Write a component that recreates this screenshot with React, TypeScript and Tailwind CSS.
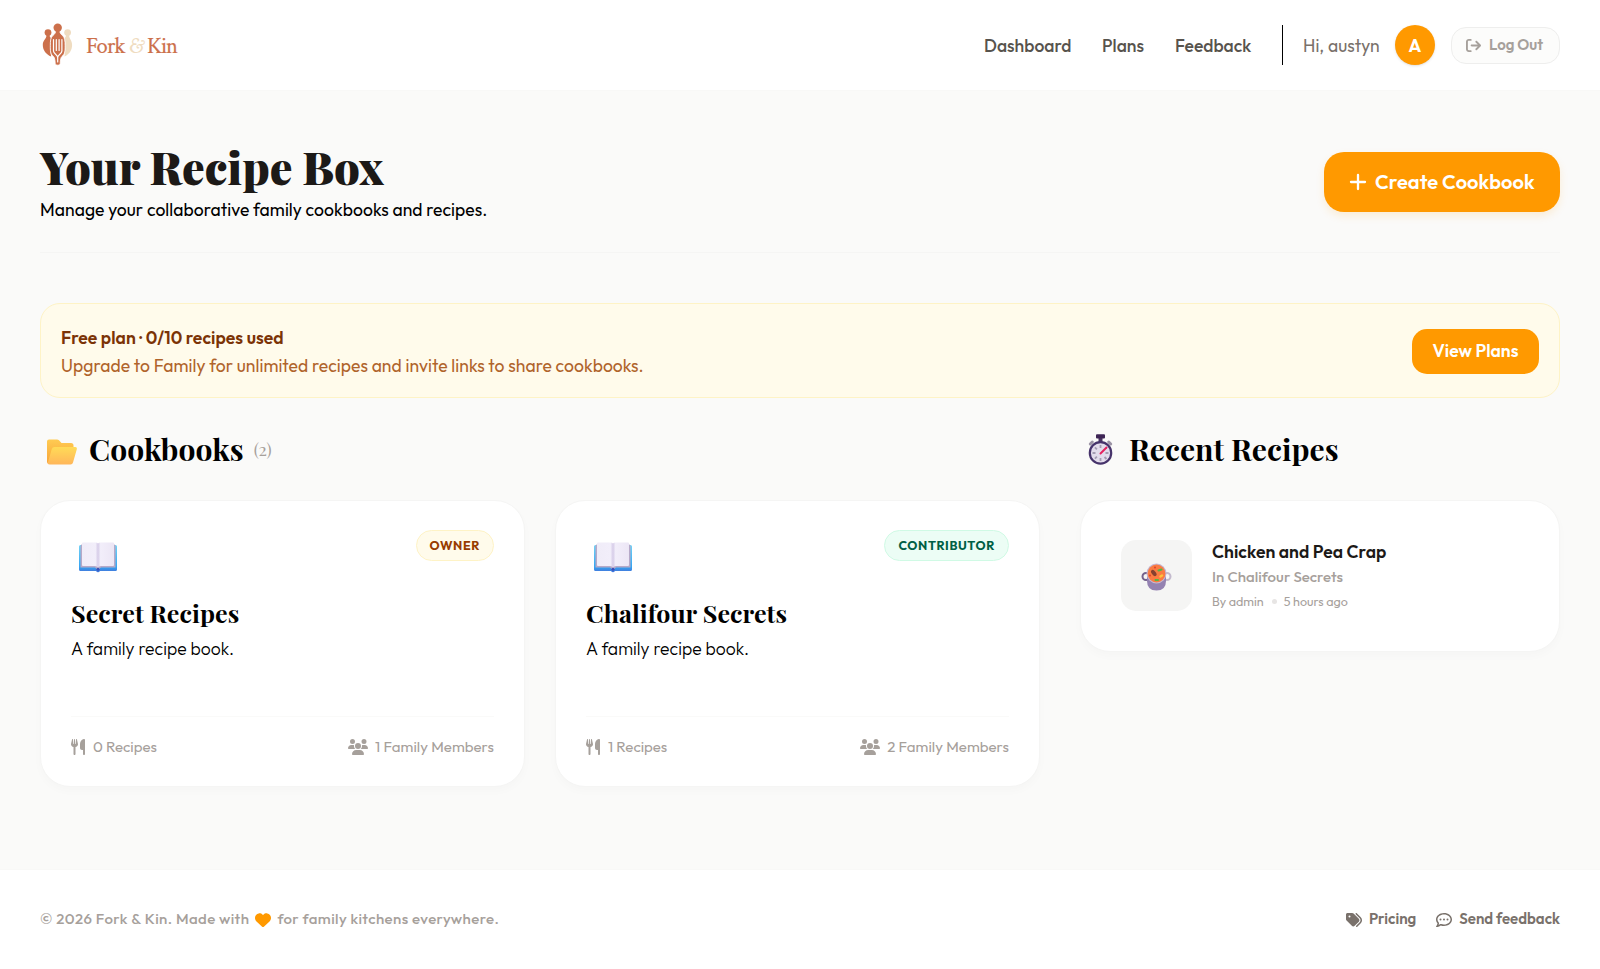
import type { ReactNode } from "react";
import { Plus } from "lucide-react";
import { FaArrowRightFromBracket, FaHeart, FaRegCommentDots, FaTags, FaUsers, FaUtensils } from "react-icons/fa6";

const serif = "font-['Playfair_Display','Liberation_Serif',serif]";

const cookbooks = [
  {
    title: "Secret Recipes",
    role: "OWNER",
    badge: "border-[#fef3c6] bg-[#fffbeb] text-[#973c00]",
    recipes: 0,
    members: 1,
  },
  {
    title: "Chalifour Secrets",
    role: "CONTRIBUTOR",
    badge: "border-[#d0fae5] bg-[#ecfdf5] text-[#006045]",
    recipes: 1,
    members: 2,
  },
];

function Logo() {
  return (
    <svg viewBox="40 20 140 50" className="h-[50px] w-[140px]" aria-label="Fork & Kin">
      <g fill="#cc704b">
        <circle cx="48" cy="32.6" r="3.4" />
        <path d="M46.5 35h3c.1 1.500.6 2.300 1.500 3-1 4-1.300 11 .2 18.500-5.200-2-8.400-6.500-8.400-11.500 0-5 3.600-5.500 3.700-10z" />
      </g>
      <g fill="#efdcc0">
        <circle cx="67.6" cy="32.6" r="3.4" />
        <path d="M66.1 35h3c.1 4.500 3 5 3 10 0 5-2.800 9.500-7.700 11.500 1.400-7.500 1.200-14.500.2-18.500.9-.7 1.400-1.500 1.500-3z" />
      </g>
      <path
        d="M55.800 30h3.800c.2 3 1 4 2.900 5.500 2.300 1.900 2.600 5.500 2.600 10 0 5 .1 8.500-3.200 11-1 .8-1.600 3.500-1.700 7 0 2.200-5 2.200-5 0-.1-3.500-.7-6.200-1.700-7-3.300-2.500-3.200-6-3.200-11 0-4.500.3-8.100 2.600-10 1.900-1.500 2.700-2.500 2.900-5.500z"
        fill="#cc704b"
        stroke="#fff"
        strokeWidth=".8"
      />
      <circle cx="57.7" cy="27.8" r="4.2" fill="#cc704b" />
      <path
        d="M53.500 39.500V51c0 3 4.200 3.500 4.200 6.500V62M61.900 39.500V51c0 3-4.200 3.500-4.200 6.500M56.300 39.500v11M59.100 39.500v11"
        fill="none"
        stroke="#fff"
        strokeWidth="1.2"
        strokeLinecap="round"
      />
      <g fontFamily="'Crimson Text', 'Crimson Pro', 'Liberation Serif', serif" fontSize="22.5">
        <text x="86" y="53.3" fill="#cc704b" stroke="#cc704b" strokeWidth=".2" textLength="39.5">Fork</text>
        <text x="128.500" y="53.3" fill="#efdcc0" fontStyle="italic" textLength="15" lengthAdjust="spacingAndGlyphs">&amp;</text>
        <text x="147" y="53.3" fill="#cc704b" stroke="#cc704b" strokeWidth=".2" textLength="31">Kin</text>
      </g>
    </svg>
  );
}

function FolderIcon() {
  return (
    <svg viewBox="0 0 30 26" className="h-[26px] w-[30px]">
      <defs>
        <linearGradient id="folderBack" x1="0" y1="0" x2="0" y2="1">
          <stop offset="0" stopColor="#ffcb52" />
          <stop offset="1" stopColor="#f7a338" />
        </linearGradient>
        <linearGradient id="folderFront" x1="0" y1="0" x2="0" y2="1">
          <stop offset="0" stopColor="#ffdb57" />
          <stop offset="1" stopColor="#ffb65a" />
        </linearGradient>
      </defs>
      <path d="M0 2.500Q0 .5 2 .5h8q1.200 0 2 .8L14.500 4H24q2.500 0 2.500 2.500V16L20 25H2.500Q0 25 0 22.500z" fill="url(#folderBack)" />
      <path d="M7.500 8H28q2.300 0 1.800 2.200L26 23.500q-.5 2-2.500 2H2.800Q.3 25.500 1 23L4.800 10q.6-2 2.700-2z" fill="url(#folderFront)" />
    </svg>
  );
}

function StopwatchIcon() {
  return (
    <svg viewBox="0 0 25 31" className="h-[31px] w-[25px]">
      <rect x="10.5" y="3" width="4" height="5" fill="#4a3563" />
      <rect x="8" y=".3" width="9" height="4.2" rx="1" fill="#3d2455" />
      <path d="M2.300 10l2-2M22.700 10l-2-2" stroke="#9b93a5" strokeWidth="3" strokeLinecap="round" />
      <circle cx="12.5" cy="18.9" r="10.7" fill="#e3dcec" stroke="#46336b" strokeWidth="2.2" />
      <g stroke="#a49cb2" strokeWidth="1.8">
        <path d="M12.500 11v3M12.500 24v3M4.500 19h3M17.500 19h3M6.900 13.300l2 2M16.500 23l2 2M6.900 24.700l2-2" />
      </g>
      <path d="M12.500 19.500l6-6" stroke="#e5225f" strokeWidth="2" strokeLinecap="round" />
    </svg>
  );
}

function BookIcon() {
  return (
    <svg viewBox="0 0 38 31" className="h-[31px] w-[38px]">
      <defs>
        <linearGradient id="cover" x1="0" y1="0" x2="0" y2="1">
          <stop offset="0" stopColor="#74d2f5" />
          <stop offset=".8" stopColor="#35a5f2" />
          <stop offset="1" stopColor="#4472d8" />
        </linearGradient>
        <linearGradient id="page" x1="0" y1="0" x2="1" y2="0">
          <stop offset="0" stopColor="#f0ecf8" />
          <stop offset=".42" stopColor="#f2eefa" />
          <stop offset=".5" stopColor="#d6cce8" />
          <stop offset=".58" stopColor="#f2eefa" />
          <stop offset="1" stopColor="#ece6f5" />
        </linearGradient>
      </defs>
      <path d="M0 4.500Q0 3 1.500 3h35Q38 3 38 4.500v23q0 1.500-1.500 1.500H21q-2 2.500-4 0H1.500Q0 29 0 27.500z" fill="url(#cover)" />
      <path d="M1.500 4l1.500-2h32l1.500 2v21.500H22L19 28l-3-2.500H1.500z" fill="#b7a9c8" />
      <path d="M3 1.500Q3 .5 4 .5h12q2.500 0 3 1 .5-1 3-1h12q1 0 1 1V23q0 1-1 1H22q-2 0-3 1.500Q18 24 16 24H4q-1 0-1-1z" fill="url(#page)" />
      <circle cx="19" cy="27.3" r="1.5" fill="#3a4eb8" />
    </svg>
  );
}

function PotIcon() {
  return (
    <svg viewBox="0 0 31 28" className="h-7 w-[31px]">
      <circle cx="5" cy="13.5" r="3.5" fill="none" stroke="#74628b" strokeWidth="2" />
      <circle cx="26" cy="13.5" r="3.5" fill="none" stroke="#c3bacd" strokeWidth="2" />
      <path d="M6 12h19v6q0 9.500-9.500 9.500T6 18z" fill="#9482b1" />
      <circle cx="15.5" cy="10.5" r="10" fill="#c5b7d3" />
      <circle cx="15.5" cy="10.5" r="8.9" fill="#fa7c42" />
      <ellipse cx="12.8" cy="10" rx="2" ry="3.6" fill="#86402f" transform="rotate(-38 12.8 10)" />
      <path d="M17.500 7.500l3-1M14.500 17h2.500" stroke="#55b648" strokeWidth="2" strokeLinecap="round" />
      <path d="M19.500 13.500l1.500-1" stroke="#ffc23c" strokeWidth="2.5" strokeLinecap="round" />
      <circle cx="14" cy="4.5" r=".9" fill="#d83b2b" />
      <circle cx="9" cy="12.5" r=".9" fill="#d83b2b" />
    </svg>
  );
}

function SectionTitle({ icon, children }: { icon: ReactNode; children: ReactNode }) {
  return (
    <h2 className={`${serif} flex h-10 items-center text-[30px] leading-10 font-bold tracking-[0.07px] text-black`}>
      <span className="flex w-[49px] justify-center pr-[9px]">{icon}</span>
      {children}
    </h2>
  );
}

export default function App() {
  return (
    <div className="flex h-[969px] flex-col overflow-hidden bg-[#fafaf9] font-['Outfit','Lato',sans-serif] text-black">
      <header className="flex h-[91px] shrink-0 items-center justify-between border-b border-[#f8f8f7] bg-white px-10">
        <Logo />
        <div className="flex items-center">
          <nav className="flex gap-[30px] pt-[2px] text-[17.5px] font-medium text-[#57534d]">
            <a className="w-[88px]">Dashboard</a>
            <a className="w-[43px]">Plans</a>
            <a className="w-[77px]">Feedback</a>
          </nav>
          <div className="ml-[30px] h-10 w-px bg-black" />
          <span className="ml-5 w-[77px] pt-[2px] text-[17.5px] tracking-[0.05px] whitespace-nowrap text-[#79716b]">Hi, austyn</span>
          <div className="ml-[15px] flex size-10 items-center justify-center rounded-full bg-[#ff9900] pt-[2px] text-[17.5px] font-bold text-white shadow-sm">
            A
          </div>
          <button className="ml-4 flex h-[37px] w-[109px] items-center gap-[8px] rounded-[15px] border border-[#eeeeed] bg-[#fcfcfb] pl-[14px] text-[15px] font-semibold whitespace-nowrap text-[#a6a09b]">
            <FaArrowRightFromBracket className="size-[15px]" />
            Log Out
          </button>
        </div>
      </header>

      <main className="flex-1 px-10">
        <div className="flex h-[162px] items-start justify-between border-b border-[#f5f5f4]">
          <div className="pt-[50px]">
            <h1 className={`${serif} text-[45px] leading-[50px] font-black text-[#1c1917]`}>Your Recipe Box</h1>
            <p className="mt-[6px] text-[17.5px] leading-[25px] tracking-[0.06px]">Manage your collaborative family cookbooks and recipes.</p>
          </div>
          <button className="mt-[61px] flex h-[60px] w-[236px] items-center gap-[5px] rounded-[20px] bg-[#ff9900] pl-[22px] text-[20px] font-semibold tracking-[0.07px] whitespace-nowrap text-white shadow-[0_4px_8px_rgba(255,153,0,0.14)]">
            <Plus className="size-6" strokeWidth={2.3} />
            Create Cookbook
          </button>
        </div>

        <div className="mt-[50px] flex h-[95px] items-center justify-between rounded-[20px] border border-[#fef3c6] bg-[#fffbeb] px-5 pt-px">
          <div className="pt-px leading-[28px]">
            <p className="text-[17.5px] font-semibold tracking-[0.06px] text-[#7b3306]">Free plan · 0/10 recipes used</p>
            <p className="text-[17.5px] tracking-[0.05px] text-[#b0642b]">
              Upgrade to Family for unlimited recipes and invite links to share cookbooks.
            </p>
          </div>
          <button className="h-[45px] w-[127px] rounded-[15px] bg-[#ff9900] pt-px text-[17.5px] font-semibold whitespace-nowrap text-white">
            View Plans
          </button>
        </div>

        <div className="mt-[31px] grid grid-cols-3 gap-x-10">
          <section className="col-span-2">
            <SectionTitle icon={<span className="pt-[5px] pl-[3px]"><FolderIcon /></span>}>
              Cookbooks
              <span className="ml-[10px] text-[17.5px] font-normal text-[#a6a09b]">(2)</span>
            </SectionTitle>
            <div className="mt-[31px] grid grid-cols-2 gap-[30px]">
              {cookbooks.map((book) => (
                <article
                  key={book.title}
                  className="flex h-[287px] flex-col rounded-[30px] border border-[#f5f5f4] bg-white px-[30px] pt-[29px] shadow-[0_4px_10px_rgba(0,0,0,0.02)]"
                >
                  <div className="flex h-[68px] items-start justify-between">
                    <div className="pt-3 pl-2">
                      <BookIcon />
                    </div>
                    <span className={`flex h-[31px] items-center rounded-full border px-[13px] pb-px text-[12.5px] font-bold tracking-[0.05em] ${book.badge}`}>
                      {book.role}
                    </span>
                  </div>
                  <h3 className={`${serif} text-[25px] leading-[30px] font-bold tracking-[0.07px]`}>{book.title}</h3>
                  <p className="mt-[8px] text-[17.5px] leading-[25px] font-light tracking-[0.05px]">A family recipe book.</p>
                  <div className="mt-auto flex h-[70px] items-start justify-between border-t border-[#fafaf9] pt-[18px] text-[15px] leading-6 text-[#a6a09b]">
                    <span className="flex items-center gap-2">
                      <FaUtensils className="h-4 w-[14px]" />
                      {book.recipes} Recipes
                    </span>
                    <span className="flex items-center gap-[7px] tracking-[0.05px]">
                      <FaUsers className="h-4 w-5" />
                      {book.members} Family Members
                    </span>
                  </div>
                </article>
              ))}
            </div>
          </section>

          <section>
            <SectionTitle icon={<span className="pt-px"><StopwatchIcon /></span>}>Recent Recipes</SectionTitle>
            <div className="mt-[31px] flex h-[152px] items-start rounded-[30px] border border-[#f5f5f4] bg-white px-10 pt-[39px] shadow-[0_4px_10px_rgba(0,0,0,0.02)]">
              <div className="flex size-[71px] items-center justify-center rounded-[15px] bg-[#f5f5f4] pt-[2px]">
                <PotIcon />
              </div>
              <div className="-mt-px ml-5">
                <p className="text-[17.5px] leading-[26px] font-semibold tracking-[0.05px] text-[#1c1917]">Chicken and Pea Crap</p>
                <p className="text-[15px] leading-[23px] font-medium tracking-[0.05px] text-[#a6a09b]">In Chalifour Secrets</p>
                <p className="mt-px flex items-center text-[12.5px] leading-6 text-[#a6a09b]">
                  By admin
                  <span className="mr-[7px] ml-2 size-[5px] rounded-full bg-[#e7e5e4]" />5 hours ago
                </p>
              </div>
            </div>
          </section>
        </div>
      </main>

      <footer className="flex h-[100px] shrink-0 items-center justify-between border-t border-[#f8f8f7] bg-white px-10 text-[15px]">
        <p className="flex items-center font-medium tracking-[0.42px] text-[#a6a09b]">
          © 2026 Fork &amp; Kin. Made with
          <FaHeart className="mx-[6px] size-4 text-[#ff9900]" />
          for family kitchens everywhere.
        </p>
        <div className="flex gap-5 font-semibold text-[#79716b]">
          <a className="flex items-center gap-[7px]">
            <FaTags className="size-4" />
            Pricing
          </a>
          <a className="flex items-center gap-[7px]">
            <FaRegCommentDots className="size-4" />
            Send feedback
          </a>
        </div>
      </footer>
    </div>
  );
}
